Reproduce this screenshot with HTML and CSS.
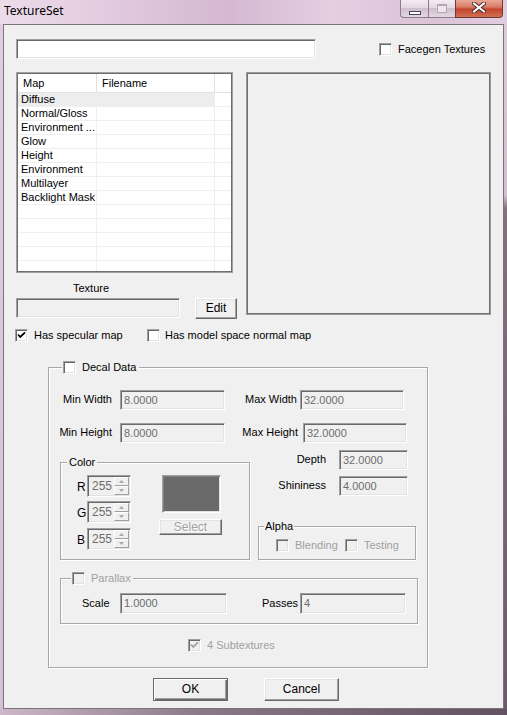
FILE: index.html
```html
<!DOCTYPE html>
<html>
<head>
<meta charset="utf-8">
<title>TextureSet</title>
<link rel="stylesheet" href="styles.css">
</head>
<body>
<div class="window">
  <div class="titlebar">
    <span class="title">TextureSet</span>
    <div class="caps">
      <div class="cap cap-min"><span class="min-glyph"></span></div>
      <div class="cap cap-max"><span class="max-glyph"></span></div>
      <div class="cap cap-close">
        <svg width="14" height="11" viewBox="0 0 14 11">
          <path d="M2 1.5 L12 9.5 M12 1.5 L2 9.5" stroke="#4a2a2e" stroke-width="4" stroke-linecap="square"/>
          <path d="M2 1.5 L12 9.5 M12 1.5 L2 9.5" stroke="#ffffff" stroke-width="2" stroke-linecap="square"/>
        </svg>
      </div>
    </div>
  </div>
  <div class="frame-mid">
    <div class="frame-l"></div>
    <div class="client">
      <div class="top-row">
        <div class="field field-white name-field"></div>
        <div class="chk facegen"><span class="cb"></span><span class="chk-text">Facegen Textures</span></div>
      </div>

      <div class="mid-row">
        <div class="left-col">
          <div class="list">
            <div class="list-in">
              <div class="list-head">
                <div class="hc c1">Map</div>
                <div class="hc c2">Filename</div>
                <div class="hc c3"></div>
              </div>
              <div class="lrow sel"><div class="lc c1">Diffuse</div><div class="lc c2"></div><div class="lc c3"></div></div>
              <div class="lrow"><div class="lc c1">Normal/Gloss</div><div class="lc c2"></div><div class="lc c3"></div></div>
              <div class="lrow"><div class="lc c1">Environment ...</div><div class="lc c2"></div><div class="lc c3"></div></div>
              <div class="lrow"><div class="lc c1">Glow</div><div class="lc c2"></div><div class="lc c3"></div></div>
              <div class="lrow"><div class="lc c1">Height</div><div class="lc c2"></div><div class="lc c3"></div></div>
              <div class="lrow"><div class="lc c1">Environment</div><div class="lc c2"></div><div class="lc c3"></div></div>
              <div class="lrow"><div class="lc c1">Multilayer</div><div class="lc c2"></div><div class="lc c3"></div></div>
              <div class="lrow"><div class="lc c1">Backlight Mask</div><div class="lc c2"></div><div class="lc c3"></div></div>
              <div class="lrow"><div class="lc c1"></div><div class="lc c2"></div><div class="lc c3"></div></div>
              <div class="lrow"><div class="lc c1"></div><div class="lc c2"></div><div class="lc c3"></div></div>
              <div class="lrow"><div class="lc c1"></div><div class="lc c2"></div><div class="lc c3"></div></div>
              <div class="lrow"><div class="lc c1"></div><div class="lc c2"></div><div class="lc c3"></div></div>
              <div class="lrow"><div class="lc c1"></div><div class="lc c2"></div><div class="lc c3"></div></div>
            </div>
          </div>
          <div class="tex-label">Texture</div>
          <div class="tex-row">
            <div class="field tex-field"></div>
            <div class="btn btn-edit">Edit</div>
          </div>
        </div>
        <div class="preview"></div>
      </div>

      <div class="check-row">
        <div class="chk spec"><span class="cb"><svg class="tick" width="11" height="11" viewBox="0 0 11 11"><path d="M2 4.5 L4.3 7 L9 2.3" fill="none" stroke="#000" stroke-width="1.8"/></svg></span><span class="chk-text">Has specular map</span></div>
        <div class="chk"><span class="cb"></span><span class="chk-text msn">Has model space normal map</span></div>
      </div>

      <div class="group decal">
        <div class="legend decal-legend"><span class="cb"></span><span class="chk-text">Decal Data</span></div>

        <div class="drow drow1">
          <span class="lbl lbl-a">Min Width</span>
          <div class="field val-field fa">8.0000</div>
          <span class="lbl lbl-b">Max Width</span>
          <div class="field val-field fb">32.0000</div>
        </div>
        <div class="drow drow2">
          <span class="lbl lbl-a">Min Height</span>
          <div class="field val-field fa">8.0000</div>
          <span class="lbl lbl-b2">Max Height</span>
          <div class="field val-field fb2">32.0000</div>
        </div>

        <div class="lower">
          <div class="group color-grp">
            <div class="legend color-legend"><span>Color</span></div>
            <div class="color-body">
              <div class="rgb-col">
                <div class="rgb-row"><span class="rgb-lbl">R</span>
                  <div class="spin"><span class="spin-val">255</span>
                    <div class="spin-btns">
                      <div class="sb"><svg width="5" height="3" viewBox="0 0 5 3"><path d="M0 3 L2.5 0 L5 3Z" fill="#a8a8a8"/></svg></div>
                      <div class="sb"><svg width="5" height="3" viewBox="0 0 5 3"><path d="M0 0 L2.5 3 L5 0Z" fill="#a8a8a8"/></svg></div>
                    </div>
                  </div>
                </div>
                <div class="rgb-row g-row"><span class="rgb-lbl">G</span>
                  <div class="spin"><span class="spin-val">255</span>
                    <div class="spin-btns">
                      <div class="sb"><svg width="5" height="3" viewBox="0 0 5 3"><path d="M0 3 L2.5 0 L5 3Z" fill="#a8a8a8"/></svg></div>
                      <div class="sb"><svg width="5" height="3" viewBox="0 0 5 3"><path d="M0 0 L2.5 3 L5 0Z" fill="#a8a8a8"/></svg></div>
                    </div>
                  </div>
                </div>
                <div class="rgb-row b-row"><span class="rgb-lbl">B</span>
                  <div class="spin"><span class="spin-val">255</span>
                    <div class="spin-btns">
                      <div class="sb"><svg width="5" height="3" viewBox="0 0 5 3"><path d="M0 3 L2.5 0 L5 3Z" fill="#a8a8a8"/></svg></div>
                      <div class="sb"><svg width="5" height="3" viewBox="0 0 5 3"><path d="M0 0 L2.5 3 L5 0Z" fill="#a8a8a8"/></svg></div>
                    </div>
                  </div>
                </div>
              </div>
              <div class="swatch-col">
                <div class="swatch"></div>
                <div class="btn btn-select">Select</div>
              </div>
            </div>
          </div>

          <div class="right-col">
            <div class="rrow"><span class="lbl">Depth</span><div class="field val-field fr">32.0000</div></div>
            <div class="rrow shin"><span class="lbl">Shininess</span><div class="field val-field fr">4.0000</div></div>
            <div class="group alpha">
              <div class="legend alpha-legend"><span>Alpha</span></div>
              <div class="alpha-body">
                <div class="chk dis blend"><span class="cb"></span><span class="chk-text">Blending</span></div>
                <div class="chk dis"><span class="cb"></span><span class="chk-text">Testing</span></div>
              </div>
            </div>
          </div>
        </div>

        <div class="group parallax">
          <div class="legend par-legend dis"><span class="cb"></span><span class="chk-text">Parallax</span></div>
          <div class="par-row">
            <span class="lbl par-lbl">Scale</span>
            <div class="field val-field fs">1.0000</div>
            <span class="lbl par-lbl2">Passes</span>
            <div class="field val-field fp">4</div>
          </div>
        </div>

        <div class="sub-row">
          <div class="chk dis"><span class="cb"><svg class="tick" width="11" height="11" viewBox="0 0 11 11"><path d="M2 4.5 L4.3 7 L9 2.3" fill="none" stroke="#a0a0a0" stroke-width="1.8"/></svg></span><span class="chk-text">4 Subtextures</span></div>
        </div>
      </div>

      <div class="button-row">
        <div class="btn btn-dlg btn-default">OK</div>
        <div class="btn btn-dlg btn-cancel">Cancel</div>
      </div>
    </div>
    <div class="frame-r"></div>
  </div>
  <div class="frame-b"></div>
</div>
</body>
</html>
```

FILE: styles.css
```css
* { box-sizing: border-box; }
html, body { margin: 0; padding: 0; }
body {
  width: 507px;
  height: 715px;
  overflow: hidden;
  font-family: "Liberation Sans", Arial, sans-serif;
  font-size: 11px;
  color: #000;
  background: #d9c4d6;
}
.window { width: 507px; height: 715px; display: flex; flex-direction: column; }

/* title bar */
.titlebar {
  height: 24px;
  flex: none;
  display: flex;
  align-items: flex-start;
  background: linear-gradient(90deg, #ecdcea 0%, #e0c8dc 25%, #d5b7d1 45%, #e4cfe1 65%, #dcc3d8 85%, #e2cce0 100%);
}
.title {
  font-family: "Noto Sans", "Open Sans", sans-serif;
  font-size: 12px;
  line-height: 16px;
  padding: 3px 0 0 4px;
  color: #000;
}
.caps { margin-left: auto; margin-right: 4px; display: flex; height: 18px; }
.cap { height: 18px; display: flex; justify-content: center; }
.cap-min {
  width: 28px;
  border: 1px solid #8c7b8a;
  border-top: none;
  border-right: none;
  border-radius: 0 0 0 4px;
  background: linear-gradient(#f4ecf3, #e4d8e3 45%, #d0bfce 50%, #e3d6e2);
}
.cap-max {
  width: 27px;
  border: 1px solid #8c7b8a;
  border-top: none;
  border-right: none;
  background: linear-gradient(#f4ecf3, #e4d8e3 45%, #d0bfce 50%, #e3d6e2);
}
.cap-close {
  width: 48px;
  border: 1px solid #6a3a36;
  border-top: none;
  border-radius: 0 0 4px 0;
  background: linear-gradient(#eaa897, #d87d68 40%, #c4452f 55%, #d2704f);
  align-items: flex-start;
  padding-top: 2px;
}
.min-glyph {
  width: 12px;
  height: 4px;
  margin-top: 11px;
  background: #fff;
  border: 1px solid #4a4356;
}
.max-glyph {
  width: 10px;
  height: 9px;
  margin-top: 4px;
  border: 1px solid #b5a6b3;
  border-top-width: 2px;
  background: #efe7ee;
}

/* frame */
.frame-mid { height: 685px; flex: none; display: flex; }
.frame-l { width: 3px; background: linear-gradient(#e2cde0, #d6c0d3); }
.frame-r { width: 3px; background: linear-gradient(#dccbd9 0%, #d2bfcf 25%, #84707f 27%, #6c5a6b 100%); }
.frame-b { height: 6px; flex: none; background: linear-gradient(90deg, #cdb8ca 0%, #8a7788 40%, #625262 100%); }

.client {
  width: 501px;
  height: 685px;
  border: 1px solid #7d717c;
  background: #f0f0f0;
  display: flex;
  flex-direction: column;
}

/* common controls */
.field {
  border: 1px solid;
  border-color: #a0a0a0 #ffffff #ffffff #a0a0a0;
  box-shadow: inset 1px 1px 0 #696969, inset -1px -1px 0 #e3e3e3;
  background: #f0f0f0;
  height: 20px;
}
.field-white { background: #fff; }
.val-field {
  color: #6d6d6d;
  padding: 2px 0 0 3px;
  line-height: 14px;
}
.cb {
  width: 13px;
  height: 13px;
  flex: none;
  border: 1px solid;
  border-color: #a0a0a0 #ffffff #ffffff #a0a0a0;
  box-shadow: inset 1px 1px 0 #696969, inset -1px -1px 0 #e3e3e3;
  background: #fff;
  display: flex;
  align-items: center;
  justify-content: center;
}
.tick { display: block; }
.chk { display: flex; align-items: center; }
.chk-text { margin-left: 6px; line-height: 13px; }
.dis { color: #a0a0a0; }
.dis .cb { background: #f0f0f0; }
.lbl { line-height: 13px; padding-top: 3px; white-space: nowrap; }
.btn {
  background: #f0f0f0;
  border: 1px solid;
  border-color: #ffffff #696969 #696969 #ffffff;
  box-shadow: inset -1px -1px 0 #a0a0a0, inset 1px 1px 0 #e3e3e3;
  display: flex;
  align-items: center;
  justify-content: center;
  line-height: 13px;
}

/* top row */
.top-row { margin-top: 14px; height: 20px; padding-left: 12px; display: flex; align-items: center; }
.name-field { width: 300px; }
.facegen { margin-left: 63px; }

/* middle row */
.mid-row { margin-top: 13px; height: 245px; padding-left: 12px; display: flex; }
.left-col { width: 221px; display: flex; flex-direction: column; }
.list { width: 217px; height: 201px; border: 1px solid #a0a0a0; }
.list-in { height: 100%; border: 1px solid #6e6e6e; background: #fff; overflow: hidden; }
.list-head { height: 19px; display: flex; border-bottom: 1px solid #e2e2e2; }
.hc { height: 18px; line-height: 18px; white-space: nowrap; }
.hc.c1, .hc.c2 { border-right: 1px solid #e0e0e0; }
.c1 { width: 79px; flex: none; padding-left: 5px; }
.c2 { width: 118px; flex: none; padding-left: 5px; }
.c3 { flex: 1; }
.lrow { height: 14px; display: flex; border-bottom: 1px solid #efefef; }
.lc { height: 13px; line-height: 13px; white-space: nowrap; }
.lc.c1 { padding-left: 3px; border-right: 1px solid #efefef; }
.lc.c2 { border-right: 1px solid #efefef; }
.lrow.sel .c1, .lrow.sel .c2 { background: #ededed; }

.tex-label { margin-top: 8px; height: 14px; line-height: 14px; padding-left: 57px; }
.tex-row { margin-top: 3px; display: flex; }
.tex-field { width: 164px; }
.btn-edit { margin-left: 15px; width: 42px; height: 21px; font-size: 12px; }

.preview {
  margin-left: 9px;
  width: 245px;
  height: 243px;
  border: 1px solid #9a9a9a;
  box-shadow: inset 0 0 0 1px #707070;
  background: #f0f0f0;
}

/* check row */
.check-row { margin-top: 12px; height: 13px; padding-left: 11px; display: flex; align-items: center; }
.spec { width: 132px; }
.msn { margin-left: 5px; }

/* groups */
.group {
  border: 1px solid #a7a7a7;
  box-shadow: inset 1px 1px 0 #fff, 1px 1px 0 #fff;
  display: flex;
  flex-direction: column;
}
.legend {
  height: 13px;
  margin-top: -7px;
  align-self: flex-start;
  background: #f0f0f0;
  display: flex;
  align-items: center;
  line-height: 13px;
}

.decal { margin-top: 25px; margin-left: 44px; width: 380px; height: 301px; flex: none; }
.decal-legend { margin-left: 13px; padding: 0 3px 0 1px; }

.drow { height: 20px; display: flex; }
.drow1 { margin-top: 16px; }
.drow2 { margin-top: 13px; }
.lbl-a { width: 63px; text-align: right; }
.fa { margin-left: 8px; width: 105px; }
.lbl-b { width: 72px; text-align: right; }
.fb { margin-left: 3px; width: 104px; }
.lbl-b2 { width: 73px; text-align: right; }
.fb2 { margin-left: 5px; width: 104px; }

.lower { margin-top: 7px; display: flex; }
.color-grp { margin-left: 11px; margin-top: 12px; width: 190px; height: 98px; }
.color-legend { margin-left: 6px; padding: 0 2px; }
.color-body { margin-top: 6px; display: flex; }
.rgb-col { margin-left: 16px; display: flex; flex-direction: column; }
.rgb-row { display: flex; align-items: center; height: 22px; }
.g-row { margin-top: 4px; }
.b-row { margin-top: 5px; }
.rgb-lbl { width: 10px; font-size: 12px; line-height: 14px; padding-top: 1px; }
.spin {
  width: 44px;
  height: 22px;
  border: 1px solid;
  border-color: #a0a0a0 #ffffff #ffffff #a0a0a0;
  box-shadow: inset 1px 1px 0 #696969, inset -1px -1px 0 #e3e3e3;
  background: #f0f0f0;
  padding: 1px;
  display: flex;
}
.spin-val { flex: 1; color: #6d6d6d; font-size: 12px; padding: 2px 0 0 3px; line-height: 14px; }
.spin-btns { width: 15px; display: flex; flex-direction: column; }
.sb {
  height: 9px;
  border: 1px solid;
  border-color: #ffffff #a0a0a0 #a0a0a0 #ffffff;
  background: #f0f0f0;
  display: flex;
  align-items: center;
  justify-content: center;
}
.sb svg { display: block; }
.swatch-col { margin-left: 28px; width: 63px; display: flex; flex-direction: column; }
.swatch {
  margin-left: 3px;
  width: 59px;
  height: 38px;
  border: 1px solid;
  border-color: #a0a0a0 #ffffff #ffffff #a0a0a0;
  box-shadow: inset 1px 1px 0 #808080, inset -1px -1px 0 #e3e3e3;
  background: #6a6a6a;
}
.btn-select { margin-top: 6px; width: 63px; height: 16px; color: #a0a0a0; text-shadow: 1px 1px 0 #fff; font-size: 12px; }

.right-col { width: 166px; display: flex; flex-direction: column; }
.rrow { height: 20px; display: flex; justify-content: flex-end; padding-right: 8px; }
.shin { margin-top: 6px; }
.fr { margin-left: 13px; width: 69px; }
.alpha { margin-top: 30px; margin-left: 8px; width: 158px; height: 34px; }
.alpha-legend { margin-left: 5px; padding: 0 1px; }
.alpha-body { margin-top: 6px; padding-left: 17px; display: flex; align-items: center; }
.blend { width: 69px; }

.parallax { margin-left: 11px; margin-top: 18px; width: 358px; height: 46px; }
.par-legend { margin-left: 10px; padding: 0 2px 0 1px; }
.par-row { margin-top: 8px; height: 21px; display: flex; }
.par-row .field { height: 21px; }
.par-lbl { margin-left: 21px; width: 38px; padding-top: 4px; }
.fs { width: 107px; }
.par-lbl2 { margin-left: 35px; width: 38px; padding-top: 4px; }
.fp { width: 106px; }

.sub-row { margin-top: 15px; padding-left: 139px; height: 13px; display: flex; }

/* dialog buttons */
.button-row { margin-top: 10px; padding-left: 149px; display: flex; }
.btn-dlg { width: 75px; height: 23px; font-size: 12px; }
.btn-default {
  border-color: #696969;
  box-shadow: inset 1px 1px 0 #fff, inset -1px -1px 0 #696969, inset -2px -2px 0 #a0a0a0;
}
.btn-cancel { margin-left: 36px; }
```
